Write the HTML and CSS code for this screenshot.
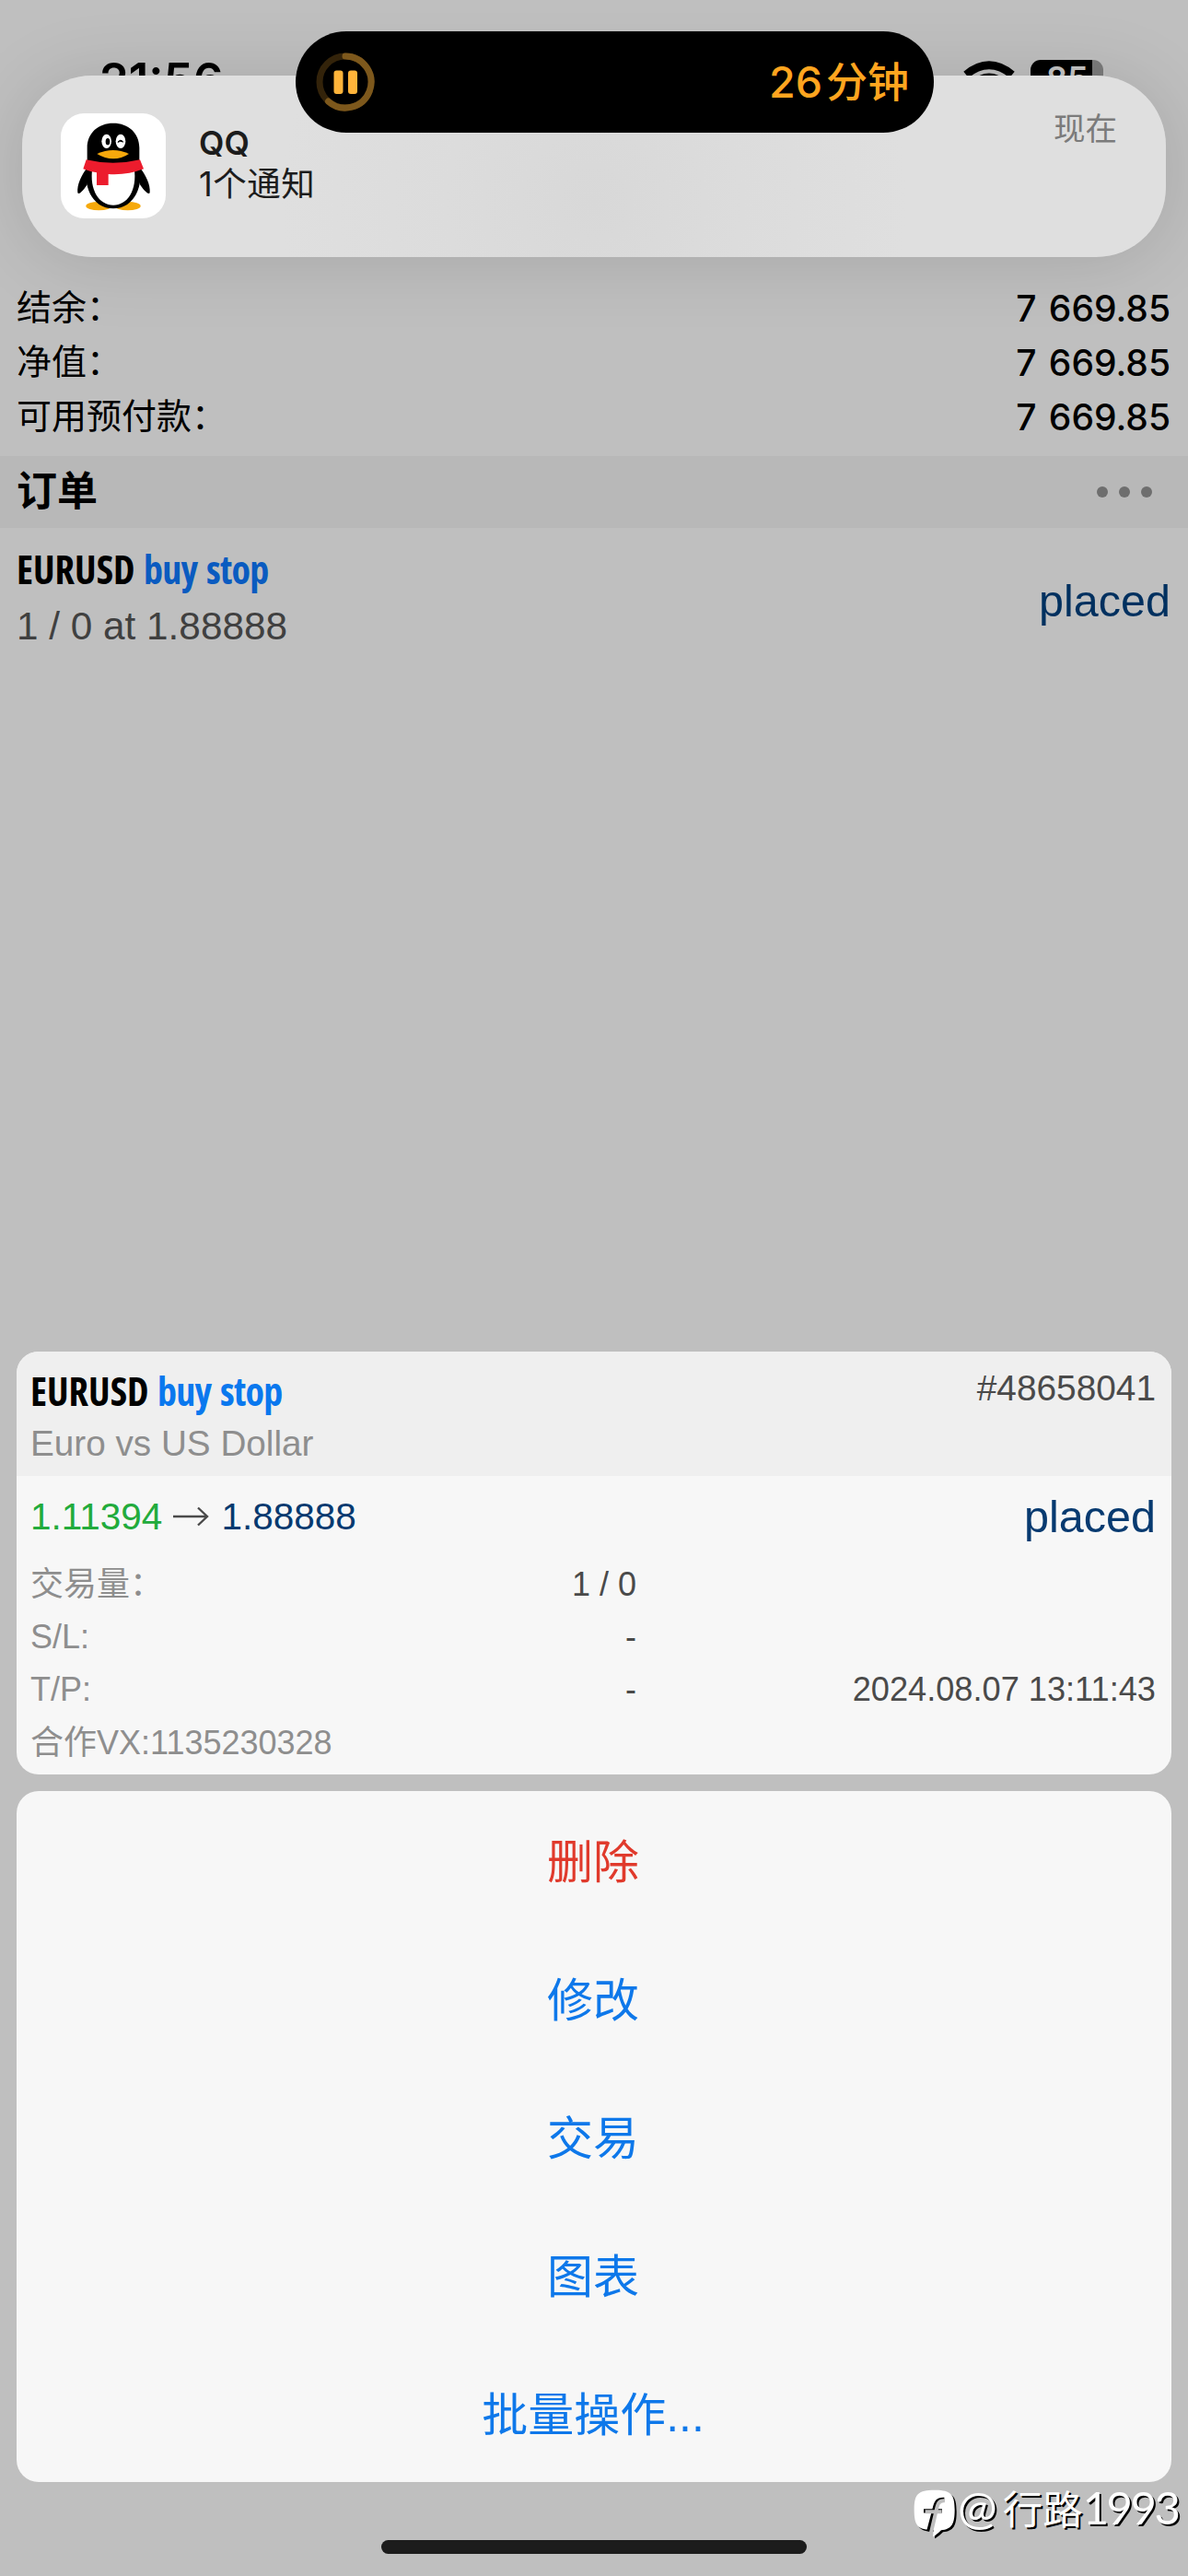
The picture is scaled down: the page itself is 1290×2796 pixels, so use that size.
FILE: index.html
```html
<!DOCTYPE html>
<html lang="zh-CN">
<head>
<meta charset="utf-8">
<title>订单</title>
<link rel="stylesheet" href="styles.css">
</head>
<body>
<header class="status">
  <span class="time">21:56</span>
  <div class="status-icons">
    <svg class="wifi" viewBox="0 0 58 46" fill="none" stroke="#000" stroke-width="8.500" stroke-linecap="butt">
      <path d="M4 16Q29 -4.500 54 16"/><path d="M12 26.500Q29 11.500 46 26.500"/><path d="M20 36Q29 28 38 36"/>
    </svg>
    <span class="battery">85</span>
  </div>
</header>

<main>
  <dl class="summary">
    <div><dt>结余：</dt><dd>7 669.85</dd></div>
    <div><dt>净值：</dt><dd>7 669.85</dd></div>
    <div><dt>可用预付款：</dt><dd>7 669.85</dd></div>
  </dl>
  <div class="section">
    <h2>订单</h2>
    <span class="dots"><i></i><i></i><i></i></span>
  </div>
  <div class="order">
    <div>
      <p class="pair">EURUSD <span>buy stop</span></p>
      <p class="volume">1 / 0 at 1.88888</p>
    </div>
    <span class="placed">placed</span>
  </div>
</main>

<aside class="banner">
  <svg class="app-icon" viewBox="48 38 342 342">
    <rect x="48" y="38" width="342" height="342" rx="76" fill="#fff"/>
    <ellipse cx="172" cy="340" rx="42" ry="14" fill="#f6a90c"/>
    <ellipse cx="266" cy="340" rx="42" ry="14" fill="#f6a90c"/>
    <path d="M134 215C116 238 100 270 103 297C108 306 126 283 134 270ZM306 215C324 238 341 270 338 297C333 306 314 283 306 270Z"/>
    <path d="M134 200V150C134 102 170 70 219 70S304 102 304 150V200C320 270 290 348 219 348S118 270 134 200Z"/>
    <path d="M151 215H287C298 290 264 337 219 337S140 290 151 215Z" fill="#fff"/>
    <path d="M131 189Q218 210 306 189L318 219Q265 240 203 236V272H165V231Q139 227 121 219Z" fill="#ec1c2d"/>
    <ellipse cx="197" cy="129" rx="16" ry="23" fill="#fff"/><ellipse cx="243" cy="129" rx="16" ry="23" fill="#fff"/>
    <ellipse cx="201" cy="130" rx="7" ry="11"/>
    <path d="M234 132Q242 120 251 131L242 129Z" stroke="#000" stroke-width="3"/>
    <path d="M166 170Q219 146 270 170Q246 186 219 186T166 170Z" fill="#f6a90c"/>
  </svg>
  <div class="banner-text"><strong>QQ</strong><span>1个通知</span></div>
  <time>现在</time>
</aside>

<div class="island">
  <svg class="timer" viewBox="0 0 64 64" fill="none">
    <circle cx="32" cy="32" r="28" stroke="#33230a" stroke-width="7"/>
    <path d="M32 4A28 28 0 1 1 13.500 53" stroke="#7d581c" stroke-width="7" stroke-linecap="round"/>
    <rect x="19.500" y="19.500" width="10" height="25.500" rx="3" fill="#ffb43a"/><rect x="35" y="19.500" width="10" height="25.500" rx="3" fill="#ffb43a"/>
  </svg>
  <span class="remaining">26<b>分钟</b></span>
</div>

<section class="sheet">
  <article class="card">
    <div class="card-head">
      <div>
        <p class="pair">EURUSD <span>buy stop</span></p>
        <p class="desc">Euro vs US Dollar</p>
      </div>
      <span class="ticket">#48658041</span>
    </div>
    <div class="card-body">
      <div class="prices">
        <span class="from">1.11394</span>
        <svg class="arrow" viewBox="0 0 40 24" fill="none" stroke="#4a4a4a" stroke-width="2.400"><path d="M1 12H38M28 2.500L38 12L28 21.500"/></svg>
        <span class="to">1.88888</span>
        <span class="placed">placed</span>
      </div>
      <div class="row"><span>交易量：</span><b>1 / 0</b></div>
      <div class="row"><span>S/L:</span><b>-</b></div>
      <div class="row"><span>T/P:</span><b>-</b><b>2024.08.07 13:11:43</b></div>
      <div class="row"><span>合作VX:1135230328</span></div>
    </div>
  </article>
  <nav class="actions">
    <a class="danger">删除</a>
    <a>修改</a>
    <a>交易</a>
    <a>图表</a>
    <a>批量操作...</a>
  </nav>
</section>

<div class="watermark">
  <svg class="mark" viewBox="120 120 150 170">
    <path transform="translate(6 6)" d="M194 128C247 128 260 141 260 192C260 240 250 255 216 259Q206 270 189 280L191 258C140 258 128 245 128 192C128 141 141 128 194 128Z"/>
    <path fill="#fff" d="M194 128C247 128 260 141 260 192C260 240 250 255 216 259Q206 270 189 280L191 258C140 258 128 245 128 192C128 141 141 128 194 128Z"/>
    <g fill="none">
      <path stroke="#000" stroke-width="13" d="M226 159C202 158 198 170 194 190L175 262M159 196H219"/>
      <path stroke="#bfbfbf" stroke-width="12" d="M228 163C208 161 204 174 200 194L183 266M164 199H218"/>
    </g>
  </svg>
  <span><i class="at">@</i>行路<i class="num">1993</i></span>
</div>
<div class="home-bar"></div>
</body>
</html>
```
FILE: styles.css
```css
* { box-sizing: border-box; margin: 0; padding: 0; }

body {
  position: relative;
  width: 1290px;
  height: 2796px;
  overflow: hidden;
  background: #bfbfbf;
  color: #000;
  font-family: "Liberation Sans", "Noto Sans CJK SC", sans-serif;
}

i, b { font-style: normal; font-weight: inherit; }

.status {
  display: flex;
  justify-content: space-between;
  height: 305px;
  padding: 65px 92px 0 108px;
}
.time { font: 600 51px/44px Inter, sans-serif; }
.status-icons { display: flex; gap: 16px; height: 38px; }
.wifi { width: 58px; height: 46px; }
.battery {
  width: 79px;
  height: 38px;
  padding-left: 17px;
  border-radius: 11px;
  background: linear-gradient(90deg, #000 67px, #7b7b7b 67px);
  color: #c4c4c4;
  font: 600 36px/41px Inter, sans-serif;
}

.summary > div {
  display: flex;
  justify-content: space-between;
  height: 59px;
  padding: 0 19px 0 18px;
  line-height: 59px;
}
.summary dt { font-size: 38px; }
.summary dd { font-family: Inter, sans-serif; font-size: 39px; font-weight: 500; word-spacing: 3px; }

.section {
  display: flex;
  justify-content: space-between;
  align-items: center;
  height: 78px;
  margin-top: 13px;
  padding: 0 39px 0 18px;
  background: #b8b8b8;
}
.section h2 { font-size: 44px; line-height: 78px; font-weight: 700; }
.dots { display: flex; gap: 12px; }
.dots i { width: 12px; height: 12px; border-radius: 50%; background: #6e6e6e; }

.order {
  display: flex;
  justify-content: space-between;
  padding: 15px 19px 0 18px;
}
.pair {
  font: 700 42px/60px "Open Sans", sans-serif;
  font-stretch: 75%;
  white-space: nowrap;
}
.pair span { margin-left: 2px; color: #0a5bc0; letter-spacing: -0.8px; word-spacing: 3px; }
.volume { margin-top: 2px; font-size: 42.3px; line-height: 60px; color: #404040; }
.placed { font-size: 48.5px; line-height: 60px; color: #00305f; }
.order .placed { margin-top: 34px; }

.banner {
  position: absolute;
  left: 24px;
  top: 82px;
  display: flex;
  width: 1242px;
  height: 197px;
  padding: 41px 53px 0 42px;
  border-radius: 76px;
  background: radial-gradient(circle at 50% 70%, #d8d8d8 0, #dcdcdc 160px, #dfdfdf 340px);
  box-shadow: 0 4px 80px rgba(0, 0, 0, .13);
  font-family: Inter, "Noto Sans CJK SC", sans-serif;
}
.app-icon { width: 114px; height: 114px; }
.banner-text {
  display: flex;
  flex-direction: column;
  flex: 1;
  padding: 11px 0 0 36px;
  color: #1c1c1c;
  line-height: 44px;
}
.banner-text strong { font-size: 35.5px; font-weight: 600; }
.banner-text span { font-size: 36.5px; letter-spacing: .5px; }
.banner time { font-size: 34.5px; line-height: 34px; color: #7b7b7b; }

.island {
  position: absolute;
  left: 321px;
  top: 34px;
  display: flex;
  align-items: center;
  justify-content: space-between;
  width: 693px;
  height: 110px;
  padding: 0 27px 0 22px;
  border-radius: 55px;
  background: #000;
}
.timer { width: 64px; height: 64px; }
.remaining {
  font: 500 46.5px/110px Inter, "Noto Sans CJK SC", sans-serif;
  color: #ffa51f;
}
.remaining b { margin-left: 4px; font-size: 45px; }

.sheet {
  position: absolute;
  left: 18px;
  right: 18px;
  top: 1467px;
  display: grid;
  gap: 18px;
}
.card, .actions { border-radius: 24px; background: #f7f7f7; overflow: hidden; }
.card { height: 459px; }
.card-head {
  display: flex;
  justify-content: space-between;
  height: 135px;
  padding: 13px 17px 0 15px;
  background: #efefef;
}
.card .pair span { color: #0a78ee; }
.desc { font-size: 38.7px; line-height: 54px; color: #8e8e8e; }
.ticket { font-size: 38.8px; line-height: 53px; color: #4a4a4a; }
.card-body { padding: 14px 17px 0 15px; }
.prices {
  display: flex;
  align-items: center;
  height: 60px;
  margin-bottom: 15px;
  font-size: 40.5px;
  line-height: 60px;
}
.from { color: #22ab3c; }
.arrow { width: 40px; height: 24px; margin: 0 13px 0 11px; }
.to { color: #073a70; }
.prices .placed { margin-left: auto; color: #073a70; }
.row {
  display: grid;
  grid-template-columns: 658px 1fr;
  height: 57.2px;
  line-height: 57px;
  font-size: 36px;
  color: #8e8e8e;
}
.row > * { grid-row: 1; grid-column: 1; }
.row b { justify-self: end; color: #4a4a4a; }
.row b + b { grid-column: 2; font-size: 36.2px; }

.actions { display: grid; grid-auto-rows: 150px; }
.actions a { padding-right: 2px; font-size: 50px; line-height: 156px; text-align: center; color: #0e78ea; }
.actions .danger { color: #e03a2c; }

.watermark {
  position: absolute;
  left: 990px;
  top: 2696px;
  display: flex;
  align-items: flex-start;
  height: 60px;
  color: #fff;
  white-space: nowrap;
}
.mark { width: 50px; height: 56.7px; margin-top: 4px; }
.watermark span { font: 43.500px/50px Lato, "Noto Sans CJK SC", sans-serif; text-shadow: 2px 2px 0 #000; }
.watermark i { font-size: 49px; }
.watermark .at { margin-right: 6px; font-size: 51px; }
.watermark .num { letter-spacing: -2.5px; }

.home-bar {
  position: absolute;
  left: 414px;
  top: 2757px;
  width: 462px;
  height: 15px;
  border-radius: 8px;
  background: #1c1c1c;
}
```
